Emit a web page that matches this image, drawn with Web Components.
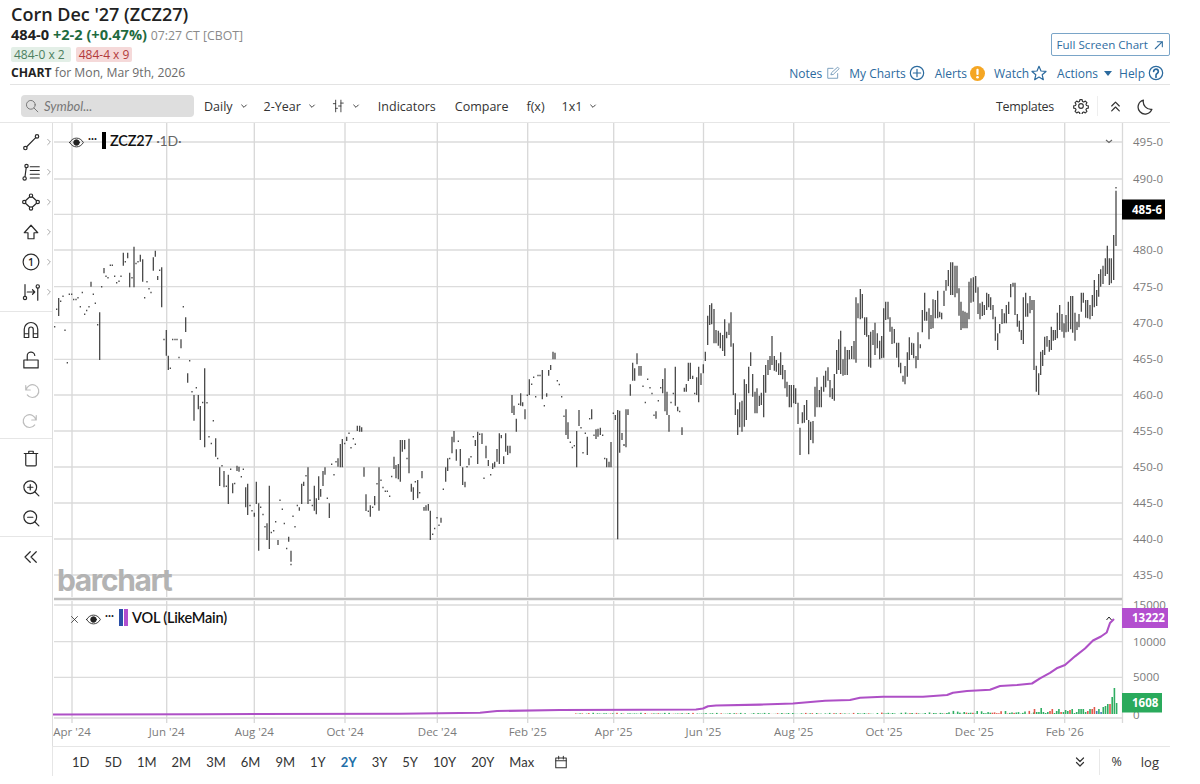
<!DOCTYPE html>
<html>
<head>
<meta charset="utf-8">
<title>Corn Dec '27 (ZCZ27)</title>
<style>
    html,body{margin:0;padding:0;background:#fff;}
    body{width:1200px;height:784px;overflow:hidden;font-family:"Open Sans","Liberation Sans",sans-serif;color:#333;}
</style>
</head>
<body>
<bc-header>
    <span slot="title">Corn Dec '27 (ZCZ27)</span>
</bc-header>
<bc-toolbar></bc-toolbar>
<bc-main></bc-main>
<bc-rangebar></bc-rangebar>

<script>
// icons, all on a 24 box
const ICONS={
    line:`<circle cx="4.5" cy="20" r="2.3"/><circle cx="20" cy="4.5" r="2.3"/><path d="M6.2 18.3 18.3 6.2"/>`,
    fib:`<circle cx="6" cy="4" r="2.2"/><circle cx="3.5" cy="20.5" r="2.2"/><path d="M5.6 6.2 4 18.3M11 5h12M11 10h12M11 15h12M11 20h12"/>`,
    pattern:`<circle cx="12" cy="3.5" r="2.2"/><circle cx="12" cy="20.5" r="2.2"/><circle cx="3" cy="12" r="2.2"/><circle cx="21" cy="12" r="2.2"/><path d="M10.4 5 4.6 10.4M13.6 5l5.8 5.4M4.6 13.6l5.8 5.4M19.4 13.6 13.6 19"/>`,
    arrow:`<path d="M12 3 3 13h5v8h8v-8h5z"/>`,
    one:`<circle cx="12" cy="12" r="10.500"/><text x="12" y="17" text-anchor="middle" font-size="14" font-weight="600" fill="currentColor" stroke="none" font-family="Open Sans">1</text>`,
    measure:`<path d="M4 2v16M21 7v16M7 12h10M14 9l3 3-3 3"/><circle cx="4" cy="20" r="2.2"/><circle cx="21" cy="4.5" r="2.2"/>`,
    magnet:`<path d="M3 22V11a9 9 0 0 1 18 0v11h-6V11a3 3 0 0 0-6 0v11zM3 17h6M15 17h6"/>`,
    unlock:`<rect x="2.500" y="12" width="19" height="10.500"/><path d="M7 12V7a5 5 0 0 1 10-1"/>`,
    undo:`<path d="M5 6v6h6M5.5 12A8.5 8.5 0 1 1 7 18.5"/>`,
    redo:`<path d="M19 6v6h-6M18.5 12A8.5 8.5 0 1 0 17 18.5"/>`,
    trash:`<path d="M3 6h18M9 6V3h6v3M5 6v15a1.500 1.500 0 0 0 1.500 1.500h11A1.500 1.500 0 0 0 19 21V6"/>`,
    zoomin:`<circle cx="11" cy="11" r="8.5"/><path d="M17 17l5.5 5.5M7.5 11h7M11 7.5v7"/>`,
    zoomout:`<circle cx="11" cy="11" r="8.5"/><path d="M17 17l5.5 5.5M7.5 11h7"/>`,
    dleft:`<path d="M11 5 4 12l7 7M19 5l-7 7 7 7"/>`,
    right:`<path d="M8 4l8 8-8 8"/>`,
    down:`<path d="M5 9l7 7 7-7"/>`,
    search:`<circle cx="10" cy="10" r="7.5"/><path d="M15.5 15.5 22 22"/>`,
    bars:`<path d="M8 2v20M4 8h4M8 16h3M17 2v20M13 12h4M17 7h4"/>`,
    gear:`<path d="M10.300 2.500h3.400l.5 2.700 2 .9 2.300-1.500 2.400 2.400-1.500 2.300.9 2 2.700.5v3.400l-2.700.5-.9 2 1.500 2.300-2.400 2.400-2.300-1.500-2 .9-.5 2.700h-3.400l-.5-2.700-2-.9-2.300 1.500-2.400-2.400 1.500-2.300-.9-2-2.700-.5v-3.400l2.700-.5.9-2-1.500-2.300 2.400-2.400 2.300 1.500 2-.9z"/><circle cx="12" cy="12" r="3.500"/>`,
    dup:`<path d="M5 11l7-7 7 7M5 20l7-7 7 7"/>`,
    ddown:`<path d="M5 4l7 7 7-7M5 13l7 7 7-7"/>`,
    moon:`<path d="M9 3a10 10 0 1 0 12 13A11 11 0 0 1 9 3z"/>`,
    calendar:`<rect x="3" y="5" width="18" height="17"/><path d="M3 10h18M8 2v5M16 2v5"/>`,
    notes:`<path d="M20 13v8H3V4h9"/><path d="M10 11 20 2l2.500 2.500-10 10-3.500.5z"/>`,
    plus:`<circle cx="12" cy="12" r="10"/><path d="M12 6.500v11M6.500 12h11"/>`,
    star:`<path d="M12 2l3 7 7.500.7-5.700 5 1.700 7.300-6.500-3.900L5.500 22l1.700-7.300-5.700-5L9 9z"/>`,
    help:`<circle cx="12" cy="12" r="10"/><path d="M8.500 9.500a3.500 3.500 0 1 1 5.500 3c-1.300.8-2 1.300-2 2.800M12 17.200v1.300" stroke-width="2.600"/>`,
    expand:`<path d="M3 21 20 4M8 4h12v12"/>`,
    eye:`<path d="M1 12c3-5 7-7 11-7s8 2 11 7c-3 5-7 7-11 7s-8-2-11-7z"/><circle cx="12" cy="12" r="4.500" fill="currentColor"/>`,
    close:`<path d="M4 4l16 16M20 4 4 20"/>`
};

class BcIcon extends HTMLElement {
    connectedCallback(){
        const size=this.getAttribute('size')||18;
        const sw=this.getAttribute('sw')||1.6;
        this.attachShadow({mode:'open'}).innerHTML=`
            <style>
                :host{display:inline-flex;width:${size}px;height:${size}px;flex:none;}
                svg{display:block;width:100%;height:100%;}
            </style>
            <svg viewBox="0 0 24 24" fill="none" stroke="currentColor" stroke-width="${sw}" stroke-linejoin="round" stroke-linecap="round">${ICONS[this.getAttribute('name')]||''}</svg>
        `;
    }
}
customElements.define('bc-icon',BcIcon);

class BcHeader extends HTMLElement {
    constructor(){
        super();
        this.attachShadow({mode:'open'}).innerHTML=`
            <style>
                :host{display:flex;justify-content:space-between;height:84px;margin:0 30px 0 10px;border-bottom:1px solid #e3e3e3;box-sizing:content-box;font-family:"Open Sans",sans-serif;}
                .left{padding-left:1px;}
                h1{margin:0;padding-top:3px;font-size:18px;line-height:22px;font-weight:600;color:#222;}
                .price{height:18px;font-size:14.600px;line-height:18px;font-weight:700;color:#222;white-space:nowrap;}
                .price b{color:#1f6b3f;font-weight:700;}
                .price span{font-size:12.300px;font-weight:400;color:#8a8a8a;}
                .quotes{display:flex;gap:5px;margin-top:4px;height:15px;}
                .quotes span{font-size:12px;line-height:15px;border-radius:2px;}
                .bid{background:#e3efe7;color:#4d7f60;padding:0 6px 0 3px;}
                .ask{background:#f5d9d9;color:#b23a3a;padding:0 3px;}
                .when{margin-top:3px;height:16px;font-size:12.200px;line-height:16px;color:#6b6b6b;}
                .when b{color:#222;font-weight:700;}
                .right{display:flex;flex-direction:column;align-items:flex-end;}
                .full{margin-top:33px;height:23px;box-sizing:border-box;border:1px solid #7aa5c8;border-radius:2px;padding:0 5px;display:flex;align-items:center;gap:6px;font-size:11.600px;color:#2f6d9f;}
                .links{display:flex;align-items:center;margin-top:8px;height:18px;font-size:12px;color:#2b6a9e;white-space:nowrap;margin-right:6px;}
                .links span{display:inline-block;}
                .caret{width:0;height:0;border:4px solid transparent;border-top:5px solid #2b6a9e;border-bottom:0;margin-left:6px;}
            </style>
            <div class="left">
                <h1><slot name="title"></slot></h1>
                <div class="price">484-0 <b>+2-2 (+0.47%)</b> <span>07:27 CT [CBOT]</span></div>
                <div class="quotes"><span class="bid">484-0 x 2</span><span class="ask">484-4 x 9</span></div>
                <div class="when"><b>CHART</b> for Mon, Mar 9th, 2026</div>
            </div>
            <div class="right">
                <div class="full">Full Screen Chart <bc-icon name="expand" size="10" sw="2.600"></bc-icon></div>
                <div class="links">
                    <span>Notes</span><bc-icon name="notes" size="14" sw="1.500" style="color:#6b93b5;margin-left:4px"></bc-icon>
                    <span style="margin-left:9px">My Charts</span><bc-icon name="plus" size="16" sw="1.800" style="margin-left:3px"></bc-icon>
                    <span style="margin-left:10px">Alerts</span>
                    <svg width="15" height="15" viewBox="0 0 16 16" style="margin-left:3px"><circle cx="8" cy="8" r="8" fill="#f5a623"/><rect x="6.800" y="3" width="2.400" height="6.500" rx="1" fill="#fff"/><circle cx="8" cy="12" r="1.400" fill="#fff"/></svg>
                    <span style="margin-left:9px">Watch</span><bc-icon name="star" size="16" sw="1.800" style="margin-left:2px"></bc-icon>
                    <span style="margin-left:10px">Actions</span><i class="caret"></i>
                    <span style="margin-left:7px">Help</span><bc-icon name="help" size="16" sw="1.900" style="margin-left:3px"></bc-icon>
                </div>
            </div>
        `;
    }
}
customElements.define('bc-header',BcHeader);

class BcTool extends HTMLElement {
    connectedCallback(){
        const caret=this.hasAttribute('caret');
        this.attachShadow({mode:'open'}).innerHTML=`
            <style>
                :host{display:inline-flex;align-items:center;font-size:12.500px;color:#333;white-space:nowrap;}
                bc-icon{margin-left:7px;color:#333;}
            </style>
            <slot></slot>${caret?'<bc-icon name="down" size="8" sw="2.800"></bc-icon>':''}
        `;
    }
}
customElements.define('bc-tool',BcTool);

class BcToolbar extends HTMLElement {
    constructor(){
        super();
        this.attachShadow({mode:'open'}).innerHTML=`
            <style>
                :host{display:flex;align-items:center;box-sizing:border-box;height:38px;margin-right:30px;padding:5px 0 0 21px;border-bottom:1px solid #e6e6e6;font-family:"Open Sans",sans-serif;color:#333;}
                .search{width:173px;height:22px;box-sizing:border-box;background:#dedede;border-radius:4px;display:flex;align-items:center;padding-left:4px;gap:5px;color:#777;font:italic 13px Lato,sans-serif;}
                .fill{flex:1;}
                .sep{width:1px;height:20px;background:#eee;margin:0 11px 0 8px;}
                .ic{color:#333;}
            </style>
            <div class="search"><bc-icon name="search" size="14" sw="1.700"></bc-icon>Symbol...</div>
            <bc-tool caret style="margin-left:10px">Daily</bc-tool>
            <bc-tool caret style="margin-left:16px">2-Year</bc-tool>
            <bc-tool caret style="margin-left:15px"><bc-icon class="ic" name="bars" size="14" sw="1.500"></bc-icon></bc-tool>
            <bc-tool style="margin-left:18px">Indicators</bc-tool>
            <bc-tool style="margin-left:19px">Compare</bc-tool>
            <bc-tool style="margin-left:18px">f(x)</bc-tool>
            <bc-tool caret style="margin-left:17px">1x1</bc-tool>
            <div class="fill"></div>
            <bc-tool style="letter-spacing:-.3px">Templates</bc-tool>
            <bc-icon class="ic" name="gear" size="16" sw="1.700" style="margin-left:19px"></bc-icon>
            <div class="sep"></div>
            <bc-icon class="ic" name="dup" size="13" sw="2.300"></bc-icon>
            <bc-icon class="ic" name="moon" size="17" sw="1.800" style="margin:0 16px 0 15px"></bc-icon>
        `;
    }
}
customElements.define('bc-toolbar',BcToolbar);

class BcSidebar extends HTMLElement {
    constructor(){
        super();
        const row=(name,more)=>`<div class="row"><bc-icon name="${name}" size="18" sw="1.600"></bc-icon>${more?'<bc-icon class="more" name="right" size="8" sw="2.200"></bc-icon>':''}</div>`;
        const off=(name)=>`<div class="row off"><bc-icon name="${name}" size="18" sw="1.600"></bc-icon></div>`;
        this.attachShadow({mode:'open'}).innerHTML=`
            <style>
                :host{display:block;width:52px;flex:none;box-sizing:content-box;border-right:1px solid #dedede;padding-top:4px;color:#2a2a2a;}
                .row{height:30px;display:flex;align-items:center;padding-left:22px;position:relative;}
                .more{margin-left:5px;color:#8a8a8a;}
                .off{color:#bdbdbd;}
                hr{border:0;border-top:1px solid #e6e6e6;margin:0;}
            </style>
            ${['line','fib','pattern','arrow','one','measure'].map(n=>row(n,true)).join('')}
            <hr style="margin:4px 0 3px">
            ${row('magnet')}${row('unlock')}${off('undo')}${off('redo')}
            <hr style="margin:3px 0 4px">
            ${row('trash')}${row('zoomin')}${row('zoomout')}
            <hr style="margin:3px 0 5px">
            ${row('dleft')}
        `;
    }
}
customElements.define('bc-sidebar',BcSidebar);

class BcLegend extends HTMLElement {
    connectedCallback(){
        const swatch=(this.getAttribute('swatch')||'#000').split(',');
        this.attachShadow({mode:'open'}).innerHTML=`
            <style>
                :host{position:absolute;display:flex;align-items:center;font:600 14.500px/18px Lato,sans-serif;color:#111;white-space:nowrap;letter-spacing:-.2px;}
                .dots{margin:-6px 0 0 4px;width:10px;font-size:11px;line-height:10px;letter-spacing:0;color:#222;}
                .sw{width:3.500px;height:17px;margin-right:1.500px;}
                .sws{display:flex;margin:-2px 3px 0 4px;}
                bc-icon{color:#222;}
            </style>
            ${this.hasAttribute('closable')?'<bc-icon name="close" size="9" sw="2" style="margin-right:7px;margin-top:3px"></bc-icon>':''}
            <bc-icon name="eye" size="15" sw="1.400" style="margin-top:2px"></bc-icon>
            <span class="dots">···</span>
            <span class="sws">${swatch.map(c=>`<i class="sw" style="background:${c}"></i>`).join('')}</span>
            <slot></slot>
        `;
    }
}
customElements.define('bc-legend',BcLegend);

// price bars read off the chart: x top bottom (one value for bottom missing = a dot)
const BARS=`54.7 326.7,56.7 309,58.7 298 316,60.7 301,63 296,65 330,67.3 362.7,69.3 294,71.7 294,73.7 299.3,76 299.3,78 297.7,80.3 306.7,82.3 292.3,84.7 314,86.7 310.3,89 306.7,91 281.7 286.7,93.3 294,95.3 303,97.7 324.7,99.7 312.3 360,101.7 286.7,104 268 273.3,106 276,108 277.7,110.3 265,112.3 265,114.7 276,116.7 282.7,119 281,121 276,123.3 252.7 265.7,125.3 261.7,127.7 252.7 258.3,129.7 272.7 287.3,132 277.7,134 246.7 287.3,136 263.3,138 261.7,140.3 254.7 261.7,142.7 259.3 281.7,144.7 297.7,147 281.7,149 288.7,151 292.3,153.3 257.3 270.7,155.3 250.7 256.7,157.7 276 280,159.7 270,161.7 267.3 307.3,164 339.3,166.3 330 355.7,168.3 355.7 370,170.3 368,172.7 339.3,175 339.3,177 339.3,179 357.3,181 339.3 348.3,183.3 306.7,185.7 317.3 332,187.7 373.3 382.7,189.7 360.7,192 391.700,194 395 420.7,196.3 387.7,198.3 395 409.3,200.3 406 440,202.7 402.300,204.7 368.3 447.3,207 402.500,209 436.7,211.3 443.3,213.3 420.7,215.7 438.3 456.7,217.7 458.3,219.7 467.3 486,222 465.7,224 471 487.3,226.3 486,228.3 474.7 504,230.7 469,232.7 483.3 493.3,234.7 483.3,237 465.7 471,239 466.7 471.7,241.3 476.7,243.3 469,245.7 487.3 507.3,247.7 483.7 515,250 505.3,252 510.7,254.3 512.7 516.7,256.3 481.7 504,258.7 503.3 550.7,260.7 507,263 514.3,265 526.7,267 523.3 540,269.3 485.7 549,271.3 532.3,273.7 530.7,275.7 521.7,278 540 545,280 500,282.3 509,284.3 523.3,286.7 548.3,288.7 536.7 541.7,291 550.7 561.7,291 564.3,293 516,295 526.7,297.3 505.3,299.3 507.3 510.7,301.7 483.7 504,303.7 481.7 486,306 475.7,308 467.3 504,310 500,312.3 505.3,314.3 485.7 510.7,316.3 498.3 514.3,318.7 476.3 500,320.7 489 496.7,323 471 486,325 467.3 474.7,327.3 498,329.3 503.3 518,331.7 464,334 474.7,336 461.7,338 458.3 466.7,340.3 444 467.3,342.3 439 467.3,344.7 443.3,346.7 436.7 441,349 433,351 447.7,353.3 438.7,355.3 444,357.3 425.7 431,359.7 425.7 431.700,361.7 427.300 431.700,364 467.3 476.7,366 494.3 511,368.3 511,370.3 505.3 516.7,372.7 507,374.7 496 505.3,377 483.7,379 467.3 510.7,381 480,383 487.3,385.3 491,387.3 491,389.7 496,391.7 476.3,394 456.7 469,396 465 478.3,398.3 464 479.3,400.3 440 481.7,402.3 440 451.7,404.7 440 449.3,407 458.3,409 438.7 473.3,411.3 483.7 491.7,413.3 487.3 500,415.3 481.7,417.7 480 498.3,419.7 492.7,422 471 478.3,424 507 510.7,426 505.3 510.7,428.3 504 510.7,430.3 510.7 540,432.7 534,434.7 528.3,437 517.7,439 525,441 517.7 522.7,443.3 489,445.7 467.3 481.7,447.7 458.3 471,449.7 458.3,452 436.7 453.3,454 431 442.3,456.3 449.3 460.7,458.3 441,460.3 449 466,462.7 467.3 485,465 481.7 487.3,467 466.7,469 458.3 465.3,471 456.7,473.3 436.7,475.3 440 446,477.7 431.7 464,479.7 434,482 433.3 444,484 478,486 445.7 458.3,488.3 460 466,490.7 474.7,492.7 463.3 469,494.7 461.7 467.3,497 449 461.7,499.3 433.3 464,501.3 435 438.3,503.7 456.3 464,505.7 433.3 451.7,507.7 445.7 455,510 445.7 453.3,512 395 413,514 405.7 415,516.3 418.7 431.7,518.7 404,520.7 393.3 405.7,522.7 402.3 406.3,525 409.3 419.3,527.3 395,529.3 379.3 395,531.7 384,533.7 377,535.7 396.7,538 375.3,540 375.3,542.3 370 399.3,544.3 405.7,546.7 393.3 396.7,548.7 370 375.7,550.7 365 370,553 351.7 359.3,555 352.7 359.3,557.3 380.7,559.3 384.3,561.7 396.7,564 416,566 409.3 435,568 422.3 439,570.3 442,572.3 447.3,574.3 445.7,576.7 431 467.3,579 410 426,581 427.7,583 452.7,585.3 433,587.3 436.7 455,589.7 418.7,591.7 409.3 419.3,594 435,596 429.3 439,598 428.7 436.7,600.3 427.7 435,602.7 435,604.7 458.3,606.7 458.3 467.3,609 461.7 467.3,611 442 467.3,613.3 413,615.3 415 420,617.7 410 539.3,619.7 410.7 452.7,622 433 440,624 444 446,626 409.3 447.3,628 409.3 415,630.3 384.3 395.7,632.7 362.7 380.7,634.7 368.3 380.7,637 353.3 364.3,639 366 375.7,641 366 375.7,643 386,645.3 402.3,647.7 379,650 387.7,652 393.3,654 415,656 411.3 418.7,658.3 400.7,660.7 387.7,662.7 379 393.3,665 368.3 411.3,667 391.7 415,669 415 431.7,671 402.3,673.3 393.3,675.3 366.7 405.7,677.7 406.7 411.3,679.7 411.3,682 427.3 435,684.3 387.7 391.7,686.3 384 391.7,688.3 362.7 381,690.3 362.7 379,692.7 375.7 379,694.7 393.3,696.7 377.3 395,698.7 366.7 402.3,701 373.3 385,703.3 364.3 373.3,705.3 351.7 361,707.7 315.7 345,709.7 305 325,711.7 303.3 324.3,714 309 343.3,716 330 343.3,718.3 330.7 345.7,720.3 332.7 348.3,722.7 335 351,724.7 319.3 356,726.7 331.7 338.3,729 323.3 335,731 312.3 346.7,733.3 343.3 395,735.3 393.3 415,737.7 409.3 435,739.7 402.3 427.3,742 400.7 431.7,744.3 379.3 426.7,746.3 384 420,748.7 366.7 393.3,750.7 352.3 366,752.7 374 396.7,755 391.7 413.3,757 388.3 413.3,759.3 395.7 406,761.3 392.7 405,763.7 375 417.3,765.7 365 392.7,768 360 375,770 356 370,772 336 365,774.3 356 370.7,776.3 360 371.7,778.7 363.3 375,780.7 352.3 375,782.7 365 379.3,785 370 388.3,787 381.7 396.7,789.3 385 407.3,791.3 385 407.3,793.7 385 403.3,795.7 388.3 404,798 402.7 424,800 427.7 455,802.3 412.3 423.3,804.3 405 422.7,806.7 400 420,808.7 420 454.3,810.7 421.7 440,813 421 443.3,815 386.7 416.7,817 377.3 407.3,819.3 390 407.3,821.3 386.7 407.3,823.7 375.7 391.7,825.7 370.7 387.3,828 367.3 380.7,830 380 397.3,832.3 388.3 399,834.3 374 400.7,836.7 350 374,838.7 339.3 370,840.7 330.7 374,843 359.3 375.7,845 346.7 375,847.3 350 375,849.3 350 359.3,851.7 346 359,854 341 359.3,856 297.3 362.7,858 303.3 318.3,860.3 289 319.3,862.3 294 318.3,864.7 317.3 335,866.7 317.3 336.7,868.7 335 366.7,870.7 331.7 367.7,873 330 345,875 322.7 355,877.3 333.3 348.3,879.7 340.7 359.3,881.7 336 358.3,883.7 308.3 357.7,885.7 301.7 320,888 301.7 319.3,890 317.3 331.7,892 326.7 344,894.3 329 343.3,896.7 342.7 357.7,898.7 342.7 367.3,900.7 362.7 373.3,903 375.7 381.7,905 366 384.3,907.3 352.3 376.7,909.3 337.3 360,911.7 342.7 355,913.7 343.3 358.3,916 356 368.3,918 332.3 360,920.3 344.3 348.3,922.3 310 332.3,924.7 292.7 320.7,926.7 311.7 320.7,929 308.3 339.3,931 315 329,933 299.3 328.3,935.3 300 318.3,937.7 290.7 318.3,939.7 311.7 317.3,941.7 312.7 319.3,944 290.7 306,946 280 290.7,948.3 270 286,950.7 262.3 295,952.7 262.3 295,955 265.7 297.3,957 265.7 293.3,959 288.3 315.7,961 301.7 330,963 310.7 328.3,965 311.7 328.3,967 312.7 328.3,969 281.7 319.3,971 278.3 302.7,973.3 277.3 301.7,975.7 276 292.7,978 287.3 314,980 303.3 319.3,982.3 301.7 316,984.3 305 315,986.7 292.7 310,988.7 294 307.3,990.7 297.3 310,993 305 319.3,995.3 316.7 340.7,997.7 333.3 350,999.7 324 333.3,1002 309 324,1004.3 313.3 323.3,1006.3 305 323.3,1008.7 301.7 314,1010.7 284 297.3,1013 282.7 286.7,1015 282.7 315,1017.3 314 326.7,1019.3 320.7 331.7,1021.3 330 340,1023.3 297.3 344,1025.7 292.7 316.7,1027.7 303.3 316.7,1030 296 313.3,1032 300 310,1034 300 370,1036.3 365.7 391.7,1038.7 373.3 395,1040.7 351.7 375,1042.7 350 366,1044.7 336.7 355,1047 336 346.7,1049.3 340 351.7,1051.3 326.7 350,1053.3 330 340.7,1055.3 330 340,1057.3 312.7 338.3,1059.7 305 330,1062 314 331.7,1064 323.3 337.7,1066 315 332.3,1068.3 301.7 331.7,1070.7 296 329.3,1072.7 296 332.7,1075 312.7 340.7,1077 321.7 330,1079 314 327.3,1081.3 292.7 311.7,1083.3 292.7 302.7,1085.7 300 317.7,1087.7 300 318.3,1090 305 319.3,1092.3 295 316,1094.3 280 307.3,1096.7 290 306,1098.7 274 296.7,1100.7 269.3 286.7,1103 265.7 284,1105.3 258.3 276,1107.3 245.7 274,1109.3 258.3 285,1111.3 258.3 283.3,1113.7 235 280,1116 190.7 246,1116 187.7`;

// last stretch of volume, heights from 1033.7 on, 2.22px apart
const VOL_H=[5,2,2,6,2,1,2,3,5,1,3,5,2,2,4,3,4,5,1,2,5,5,5,2,3,5,5,7,3,5,2,7,8,10,10,17,26,11];
const VOL_C='rggggggrrgggrgggrgggggggrgrrbgbgggrggg';
const VOL_LINE='53,714.5 200,714.2 400,713.7 480,712.8 497,711 560,710 640,709.8 696,709.5 703,708.5 708,706.2 716,705.5 760,704.600 793,703.500 825,700.800 850,700 860,697.700 883,696.800 923,696.700 947,695 953,692.700 967,691 990,689.700 1000,686 1017,685 1032,683.500 1040,678.300 1050,672.800 1056.700,668.300 1065,665 1075,656.300 1085,648.500 1093,640.500 1101,636.500 1106.700,632.500 1110,623 1114,619';

class BcChart extends HTMLElement {
    constructor(){
        super();
        const W=1147, H=623;
        const hs=[[142,'495-0'],[179,'490-0'],[214.3],[250,'480-0'],[286.7,'475-0'],[322.7,'470-0'],[359.3,'465-0'],[395,'460-0'],[431,'455-0'],[467,'450-0'],[503,'445-0'],[539,'440-0'],[575,'435-0']];
        const vols=[[605,'15000'],[641.7,'10000'],[677.3,'5000'],[715,'0']];
        const vs=[[72,"Apr '24"],[166.7,"Jun '24"],[254.3,"Aug '24"],[345,"Oct '24"],[437.3,"Dec '24"],[527.7,"Feb '25"],[613.7,"Apr '25"],[703.5,"Jun '25"],[793.7,"Aug '25"],[884,"Oct '25"],[974.3,"Dec '25"],[1064.7,"Feb '26"]];
        let grid='', labels='';
        hs.forEach(([y,t])=>{
            grid+=`M54 ${y}H1122`;
            if(t) labels+=`<text class="ax" x="1133" y="${y+4}">${t}</text>`;
        });
        vols.forEach(([y,t])=>{
            if(t!='0') grid+=`M54 ${y}H1122`;
            labels+=`<text class="ax" x="1133" y="${y+4}">${t}</text>`;
        });
        let vgrid='';
        vs.forEach(([x,t])=>{
            vgrid+=`M${x} 123V597M${x} 601V723`;
            labels+=`<text class="ax" x="${x}" y="736" text-anchor="middle">${t}</text>`;
        });
        let bars='';
        BARS.split(',').forEach(b=>{
            const [x,t,e]=b.split(' ').map(Number);
            bars+=`M${x} ${e?t:t-.6}V${e||t+.9}`;
        });
        // low volume under the line, then the taller last bars
        let vol='';
        const col={g:'#2fae62',r:'#e2574c',b:'#3f7fb5'};
        for(let x=575;x<1033;x+=2.17){
            const s=Math.abs(Math.sin(x*1.7)+Math.sin(x*.13));
            const scale=x>945?1.6:(x>880?.8:.6);
            const h=+(s*scale).toFixed(1);
            const c=(x>990&&x<999)||Math.sin(x*.9)>.75?'r':'g';
            vol+=`<rect x="${x.toFixed(1)}" y="${714-h}" width="1.600" height="${h}" fill="${col[c]}"/>`;
        }
        VOL_H.forEach((h,i)=>{
            const x=1033.7+i*2.22;
            vol+=`<rect x="${x.toFixed(1)}" y="${714-h}" width="1.600" height="${h}" fill="${col[VOL_C[i]]}"/>`;
        });
        const box=(x,y,w,h,c,t,tx)=>`<rect x="${x}" y="${y}" width="${w}" height="${h}" fill="${c}"/><text class="tag" x="${tx}" y="${y+h/2+4}">${t}</text>`;
        this.attachShadow({mode:'open'}).innerHTML=`
            <style>
                :host{display:block;position:relative;width:${W}px;height:${H}px;overflow:hidden;flex:none;}
                svg{display:block;position:absolute;left:0;top:0;}
                .ax{font:11.500px "Open Sans",sans-serif;fill:#7b7b7b;}
                .tag{font:700 11.500px "Open Sans",sans-serif;fill:#fff;}
                .mark{font:700 30px "Inter",sans-serif;fill:#b3b3b3;letter-spacing:-1.400px;}
                bc-legend.price{left:16px;top:9px;}
                bc-legend.vol{left:17px;top:486px;}
                .tail{color:#666;font-weight:400;font-size:14px;}
            </style>
            <svg width="${W}" height="${H}" viewBox="53 123 ${W} ${H}" shape-rendering="geometricPrecision">
                <path d="${grid}" stroke="#dcdcdc" stroke-width="1.300" fill="none"/>
                <path d="${vgrid}" stroke="#d8d8d8" stroke-width="1.300" fill="none"/>
                <path d="M54 718H1122M1122.500 123V723" stroke="#d9d9d9" stroke-width="1.300" fill="none"/>
                <path d="M54 599H1122" stroke="#bfbfbf" stroke-width="2.400" fill="none"/>
                <text class="mark" x="57" y="591">barchart</text>
                <path d="${bars}" stroke="#3a3a3a" stroke-width="1.200" fill="none"/>
                ${vol}
                <polyline points="${VOL_LINE}" fill="none" stroke="#ae50c6" stroke-width="2.100" stroke-linejoin="round"/>
                <path d="M1106.500 620l2.500-3 2.500 3" fill="none" stroke="#222" stroke-width="1"/>
                <path d="M1106 140l3 2.500 3-2.500" fill="none" stroke="#666" stroke-width="1.100"/>
                ${labels}
                ${box(1122,199.500,43,20,'#000','485-6',1132)}
                ${box(1122,608,46,20,'#b34fcf','13222',1132)}
                ${box(1122,693,40,19.500,'#2aaa5c','1608',1132)}
            </svg>
            <bc-legend class="price"><span>ZCZ27 <span class="tail">·1D·</span></span></bc-legend>
            <bc-legend class="vol" closable swatch="#2a4fa8,#b04fcf">VOL (LikeMain)</bc-legend>
        `;
    }
}
customElements.define('bc-chart',BcChart);

class BcMain extends HTMLElement {
    constructor(){
        super();
        this.attachShadow({mode:'open'}).innerHTML=`
            <style>:host{display:flex;height:623px;}</style>
            <bc-sidebar></bc-sidebar><bc-chart></bc-chart>
        `;
    }
}
customElements.define('bc-main',BcMain);

class BcRangebar extends HTMLElement {
    constructor(){
        super();
        const items=['1D','5D','1M','2M','3M','6M','9M','1Y','2Y','3Y','5Y','10Y','20Y','Max'];
        this.attachShadow({mode:'open'}).innerHTML=`
            <style>
                :host{display:flex;align-items:center;height:29px;margin:0 30px 0 52px;border-top:1px solid #e6e6e6;border-left:1px solid #e6e6e6;padding-left:19px;font:13px Lato,sans-serif;color:#333;}
                .range{display:flex;gap:15px;align-items:center;}
                .on{color:#1f6fa8;font-weight:700;}
                .fill{flex:1;}
                .sep{width:1px;height:26px;background:#e8e8e8;margin:0 11px 0 13px;}
            </style>
            <div class="range">
                ${items.map(t=>`<span class="${t=='2Y'?'on':''}">${t}</span>`).join('')}
                <bc-icon name="calendar" size="14" sw="1.800" style="margin-left:5px"></bc-icon>
            </div>
            <div class="fill"></div>
            <bc-icon name="ddown" size="12" sw="2.400"></bc-icon>
            <div class="sep"></div>
            <span style="font-family:'Open Sans',sans-serif;font-size:12.500px">%</span>
            <span style="margin:0 11px 0 19px;font-family:'Open Sans',sans-serif;font-size:13px">log</span>
        `;
    }
}
customElements.define('bc-rangebar',BcRangebar);
</script>
</body>
</html>
